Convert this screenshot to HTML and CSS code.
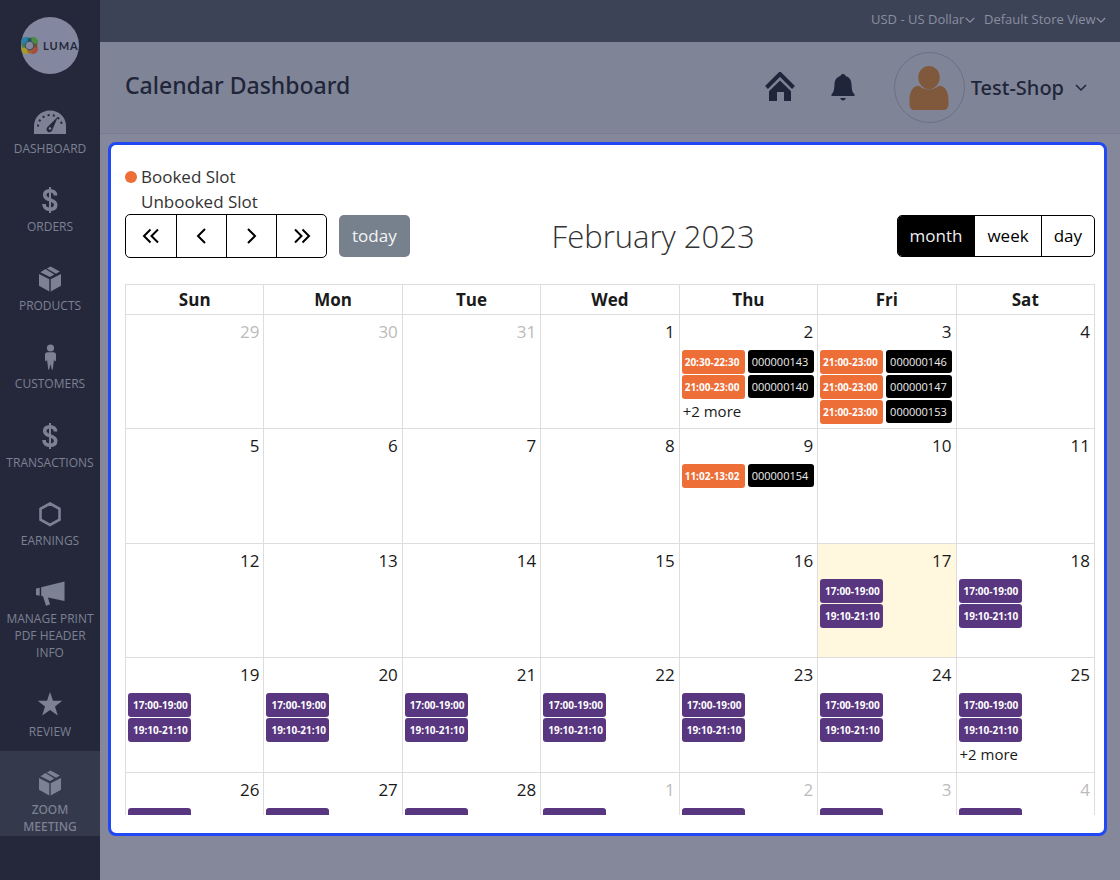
FILE: index.html
```html
<!DOCTYPE html>
<html lang="en">
<head>
    <meta charset="UTF-8">
    <meta name="viewport" content="width=device-width, initial-scale=1.0">
    <title>Calendar Dashboard</title>
    <link rel="stylesheet" href="styles.css">
</head>
<body>

    <!-- Shared icons -->
    <svg class="sprite" aria-hidden="true">
        <symbol id="icon-dollar" viewBox="0 0 16 28">
            <path d="M8 1v26" stroke="currentColor" stroke-width="2"/>
            <path d="M13.500 9.500c0-3.200-2.300-4.800-5.500-4.800S2.700 6.200 2.700 9c0 6.500 11 3.300 11 9.800 0 3-2.400 4.500-5.700 4.500s-6-1.700-6-5.300" fill="none" stroke="currentColor" stroke-width="3.600"/>
        </symbol>
        <symbol id="icon-box" viewBox="0 0 24 28">
            <path d="M1 9l10.300 5.200V26.500L1 20.800zM23 9l-10.300 5.200V26.500L23 20.800zM7.500 3.900l8.800 5.500-4.300 2.600L2.500 7.200zM12.500 1.500l9.300 5.100-3.800 2.200-9.200-5.400z" fill="currentColor"/>
        </symbol>
        <symbol id="icon-chevron" viewBox="0 0 12 8">
            <path d="M1 1l5 5 5-5" fill="none" stroke="currentColor" stroke-width="1.500"/>
        </symbol>
    </svg>

    <!-- Sidebar -->
    <aside class="sidebar">
        <a href="#" class="logo" aria-label="Luma">
            <svg width="17" height="17" viewBox="0 0 18 18">
                <rect x="0" y="7" width="11" height="11" rx="5" fill="#a79a2c"/>
                <rect x="7" y="7" width="11" height="11" rx="5" fill="#a4503f"/>
                <rect x="7" y="0" width="11" height="11" rx="5" fill="#4c8a45"/>
                <rect x="0" y="0" width="11" height="11" rx="5" fill="#2c7fa6"/>
                <path d="M7 1h4v4H7z" fill="#1d5a60"/>
                <path d="M13 7h4v4h-4z" fill="#735031"/>
                <path d="M7 13h4v4H7z" fill="#a0632c"/>
                <path d="M1 7h4v4H1z" fill="#3f7d55"/>
                <circle cx="9" cy="9" r="4.500" fill="#8388a0" stroke="#35425a" stroke-width="1"/>
            </svg>
            <span>LUMA</span>
        </a>
        <nav class="menu">
            <a href="#" class="menu-item">
                <svg width="34" height="28" viewBox="0 0 34 28">
                    <path d="M1 26V18C1 9 8 2.500 17 2.500S33 9 33 18v8z" fill="currentColor"/>
                    <g fill="none" stroke="#25283a">
                        <path d="M5 18.500a12 11.500 0 0 1 24 0" stroke-width="2" stroke-dasharray="2 3.300"/>
                        <path d="M25 8.500l-5.500 13a3 3 0 1 1-5-2.500z" fill="#25283a" stroke="none"/>
                        <circle cx="17" cy="20.500" r="1.300" fill="#8085a0" stroke="none"/>
                    </g>
                </svg>
                <span>DASHBOARD</span>
            </a>
            <a href="#" class="menu-item">
                <svg width="16" height="28"><use href="#icon-dollar"/></svg>
                <span>ORDERS</span>
            </a>
            <a href="#" class="menu-item">
                <svg width="24" height="28"><use href="#icon-box"/></svg>
                <span>PRODUCTS</span>
            </a>
            <a href="#" class="menu-item">
                <svg width="14" height="28" viewBox="0 0 14 28">
                    <circle cx="7.500" cy="5" r="3.600" fill="currentColor"/>
                    <path d="M4.500 9.300h6c1.700 0 2.500 1 2.500 2.700V17.500l-1.300 1-.7-2-.5 4-.8 6.200h-.8L7.500 21l-1.400 5.700h-.8L4.500 20.500l-.5-4-.7 2-1.300-1V12c0-1.700.8-2.700 2.500-2.700z" fill="currentColor"/>
                </svg>
                <span>CUSTOMERS</span>
            </a>
            <a href="#" class="menu-item">
                <svg width="16" height="28"><use href="#icon-dollar"/></svg>
                <span>TRANSACTIONS</span>
            </a>
            <a href="#" class="menu-item">
                <svg width="24" height="28" viewBox="0 0 24 28">
                    <path d="M12 3.500l9.500 5.300v10.900L12 25 2.500 19.700V8.800z" fill="none" stroke="currentColor" stroke-width="2.600"/>
                </svg>
                <span>EARNINGS</span>
            </a>
            <a href="#" class="menu-item">
                <svg width="30" height="28" viewBox="0 0 30 28">
                    <path d="M1 10.500l3.700-.8v8L1 17zM6.200 9.200L29.500 3.500V23L13 19.500l2 7-4 1.200-3-9.500-1.800-.4z" fill="currentColor"/>
                </svg>
                <span>MANAGE PRINT PDF HEADER INFO</span>
            </a>
            <a href="#" class="menu-item">
                <svg width="26" height="28" viewBox="0 0 26 28">
                    <path d="M13 1l3 8.800H25.300l-7.300 5.600 2.800 9L13 19l-7.800 5.400 2.800-9L.7 9.800H10z" fill="currentColor"/>
                </svg>
                <span>REVIEW</span>
            </a>
            <a href="#" class="menu-item active">
                <svg width="24" height="28"><use href="#icon-box"/></svg>
                <span>ZOOM MEETING</span>
            </a>
        </nav>
    </aside>

    <div class="page">
        <!-- Currency and store view -->
        <div class="topbar">
            <label class="switcher">
                <select aria-label="Currency"><option>USD - US Dollar</option></select>
                <svg width="10" height="7"><use href="#icon-chevron"/></svg>
            </label>
            <label class="switcher">
                <select aria-label="Store view"><option>Default Store View</option></select>
                <svg width="10" height="7"><use href="#icon-chevron"/></svg>
            </label>
        </div>

        <header class="header">
            <h1>Calendar Dashboard</h1>
            <a href="#" class="home" aria-label="Home">
                <svg width="30" height="30" viewBox="0 0 30 30" fill="currentColor">
                    <path d="M15 8.500l11 10.800V29h-7v-9h-7v9H4v-9.700z"/>
                    <path d="M1.500 16.500L15 3l13.500 13.500" fill="none" stroke="#7f8496" stroke-width="6"/>
                    <path d="M1.500 15.500L15 2l13.500 13.500" fill="none" stroke="currentColor" stroke-width="4"/>
                </svg>
            </a>
            <button class="bell" aria-label="Notifications">
                <svg width="24" height="28" viewBox="0 0 24 28" fill="currentColor">
                    <path d="M12 1c1.500 0 2.300.8 2.600 1.900C18.500 4 20.300 7 20.500 11c.2 5.500.8 8.500 3 10.300V23H.5v-1.700c2.200-1.800 2.800-4.800 3-10.300.2-4 2-7 5.900-8.100C9.700 1.800 10.500 1 12 1zM9.200 25h5.600c-.5 1.600-1.500 2.400-2.800 2.400S9.700 26.600 9.200 25z"/>
                </svg>
            </button>
            <button class="account">
                <span class="avatar">
                    <svg width="40" height="44" viewBox="0 0 40 44" fill="#80583c">
                        <ellipse cx="20" cy="11.500" rx="10.700" ry="11.500"/>
                        <path d="M10 19.700c6 5 14 5 20 0 6 0 9.500 6 9.500 14v4.500c0 3.500-2 5.800-5.500 5.800H6C2.500 44 .5 41.700.5 38.200V33.700c0-8 3.500-14 9.500-14z"/>
                    </svg>
                </span>
                <span>Test-Shop</span>
                <svg width="12" height="8"><use href="#icon-chevron"/></svg>
            </button>
        </header>

        <main class="panel">
            <ul class="legend">
                <li class="booked">Booked Slot</li>
                <li>Unbooked Slot</li>
            </ul>

            <div class="toolbar">
                <div class="toolbar-left">
                    <div class="btn-group nav-group">
                        <button aria-label="Previous year"><svg width="18" height="16" viewBox="0 0 18 16"><path d="M8.500 1.500L2 8l6.500 6.500M16 1.500L9.500 8l6.500 6.500"/></svg></button>
                        <button aria-label="Previous month"><svg width="18" height="16" viewBox="0 0 18 16"><path d="M12 1L5 8l7 7"/></svg></button>
                        <button aria-label="Next month"><svg width="18" height="16" viewBox="0 0 18 16"><path d="M5 1l7 7-7 7"/></svg></button>
                        <button aria-label="Next year"><svg width="18" height="16" viewBox="0 0 18 16"><path d="M2 1.500L8.500 8 2 14.500M9.500 1.500L16 8l-6.500 6.500"/></svg></button>
                    </div>
                    <button class="today-btn">today</button>
                </div>
                <h2>February 2023</h2>
                <div class="btn-group view-group">
                    <button class="selected">month</button>
                    <button>week</button>
                    <button>day</button>
                </div>
            </div>

            <div class="calendar-wrap">
                <table class="calendar">
                    <thead>
                        <tr>
                            <th>Sun</th>
                            <th>Mon</th>
                            <th>Tue</th>
                            <th>Wed</th>
                            <th>Thu</th>
                            <th>Fri</th>
                            <th>Sat</th>
                        </tr>
                    </thead>
                    <tbody>
                        <tr>
                            <td class="other"><div class="day">29</div></td>
                            <td class="other"><div class="day">30</div></td>
                            <td class="other"><div class="day">31</div></td>
                            <td><div class="day">1</div></td>
                            <td>
                                <div class="day">2</div>
                                <div class="event"><a href="#" class="slot taken">20:30-22:30</a><a href="#" class="order">000000143</a></div>
                                <div class="event"><a href="#" class="slot taken">21:00-23:00</a><a href="#" class="order">000000140</a></div>
                                <a href="#" class="more">+2 more</a>
                            </td>
                            <td>
                                <div class="day">3</div>
                                <div class="event"><a href="#" class="slot taken">21:00-23:00</a><a href="#" class="order">000000146</a></div>
                                <div class="event"><a href="#" class="slot taken">21:00-23:00</a><a href="#" class="order">000000147</a></div>
                                <div class="event"><a href="#" class="slot taken">21:00-23:00</a><a href="#" class="order">000000153</a></div>
                            </td>
                            <td><div class="day">4</div></td>
                        </tr>
                        <tr>
                            <td><div class="day">5</div></td>
                            <td><div class="day">6</div></td>
                            <td><div class="day">7</div></td>
                            <td><div class="day">8</div></td>
                            <td>
                                <div class="day">9</div>
                                <div class="event"><a href="#" class="slot taken">11:02-13:02</a><a href="#" class="order">000000154</a></div>
                            </td>
                            <td><div class="day">10</div></td>
                            <td><div class="day">11</div></td>
                        </tr>
                        <tr>
                            <td><div class="day">12</div></td>
                            <td><div class="day">13</div></td>
                            <td><div class="day">14</div></td>
                            <td><div class="day">15</div></td>
                            <td><div class="day">16</div></td>
                            <td class="today">
                                <div class="day">17</div>
                                <div class="event"><a href="#" class="slot">17:00-19:00</a></div>
                                <div class="event"><a href="#" class="slot">19:10-21:10</a></div>
                            </td>
                            <td>
                                <div class="day">18</div>
                                <div class="event"><a href="#" class="slot">17:00-19:00</a></div>
                                <div class="event"><a href="#" class="slot">19:10-21:10</a></div>
                            </td>
                        </tr>
                        <tr>
                            <td>
                                <div class="day">19</div>
                                <div class="event"><a href="#" class="slot">17:00-19:00</a></div>
                                <div class="event"><a href="#" class="slot">19:10-21:10</a></div>
                            </td>
                            <td>
                                <div class="day">20</div>
                                <div class="event"><a href="#" class="slot">17:00-19:00</a></div>
                                <div class="event"><a href="#" class="slot">19:10-21:10</a></div>
                            </td>
                            <td>
                                <div class="day">21</div>
                                <div class="event"><a href="#" class="slot">17:00-19:00</a></div>
                                <div class="event"><a href="#" class="slot">19:10-21:10</a></div>
                            </td>
                            <td>
                                <div class="day">22</div>
                                <div class="event"><a href="#" class="slot">17:00-19:00</a></div>
                                <div class="event"><a href="#" class="slot">19:10-21:10</a></div>
                            </td>
                            <td>
                                <div class="day">23</div>
                                <div class="event"><a href="#" class="slot">17:00-19:00</a></div>
                                <div class="event"><a href="#" class="slot">19:10-21:10</a></div>
                            </td>
                            <td>
                                <div class="day">24</div>
                                <div class="event"><a href="#" class="slot">17:00-19:00</a></div>
                                <div class="event"><a href="#" class="slot">19:10-21:10</a></div>
                            </td>
                            <td>
                                <div class="day">25</div>
                                <div class="event"><a href="#" class="slot">17:00-19:00</a></div>
                                <div class="event"><a href="#" class="slot">19:10-21:10</a></div>
                                <a href="#" class="more">+2 more</a>
                            </td>
                        </tr>
                        <tr>
                            <td><div class="day">26</div><div class="event"><a href="#" class="slot" aria-label="Open slot"></a></div></td>
                            <td><div class="day">27</div><div class="event"><a href="#" class="slot" aria-label="Open slot"></a></div></td>
                            <td><div class="day">28</div><div class="event"><a href="#" class="slot" aria-label="Open slot"></a></div></td>
                            <td class="other"><div class="day">1</div><div class="event"><a href="#" class="slot" aria-label="Open slot"></a></div></td>
                            <td class="other"><div class="day">2</div><div class="event"><a href="#" class="slot" aria-label="Open slot"></a></div></td>
                            <td class="other"><div class="day">3</div><div class="event"><a href="#" class="slot" aria-label="Open slot"></a></div></td>
                            <td class="other"><div class="day">4</div><div class="event"><a href="#" class="slot" aria-label="Open slot"></a></div></td>
                        </tr>
                    </tbody>
                </table>
            </div>
        </main>
    </div>

</body>
</html>
```
FILE: styles.css
```css
/* General Styling */
* {
    box-sizing: border-box;
}

body {
    margin: 0;
    display: flex;
    height: 100vh;
    font-family: "Open Sans", "Noto Sans", sans-serif;
    font-size: 17px;
    color: #333;
    background-color: #84889a;
}

a {
    color: inherit;
    text-decoration: none;
}

button,
select {
    font: inherit;
    color: inherit;
    background: none;
    border: none;
    margin: 0;
    padding: 0;
    cursor: pointer;
}

svg {
    display: block;
    flex: none;
}

.sprite {
    position: absolute;
    width: 0;
    height: 0;
}

/* Sidebar */
.sidebar {
    flex: none;
    width: 100px;
    padding: 17px 0 44px;
    display: flex;
    flex-direction: column;
    background-color: #25283a;
    color: #7c8194;
}

.logo {
    align-self: center;
    flex: none;
    width: 58px;
    height: 57px;
    margin-bottom: 16px;
    display: flex;
    align-items: center;
    gap: 5px;
    border-radius: 50%;
    overflow: hidden;
    background-color: #8388a0;
    color: #25283a;
    font-family: Lato, sans-serif;
    font-size: 11px;
    font-weight: 700;
    letter-spacing: 1px;
}

.menu {
    flex: 1;
    display: flex;
    flex-direction: column;
    justify-content: space-between;
}

.menu-item {
    display: flex;
    flex-direction: column;
    align-items: center;
    gap: 4px;
    padding: 18px 4px 1px;
    font-size: 12px;
    line-height: 17px;
    text-align: center;
}

.menu-item.active {
    padding-left: 20px;
    padding-right: 20px;
    background-color: #34394b;
    font-family: "Noto Sans", sans-serif;
    font-weight: 500;
}

/* Top bar */
.page {
    flex: 1;
    min-width: 0;
    display: flex;
    flex-direction: column;
}

.topbar {
    flex: none;
    height: 42px;
    padding: 0 14px 4px;
    display: flex;
    justify-content: flex-end;
    align-items: center;
    gap: 9px;
    background-color: #3c4356;
    color: #8a8fa1;
    font-size: 13px;
}

.switcher {
    display: flex;
    align-items: center;
}

.switcher select {
    appearance: none;
}

.switcher svg {
    margin-top: 3px;
}

/* Header */
.header {
    flex: none;
    height: 92px;
    padding: 0 33px 0 25px;
    display: flex;
    align-items: center;
    background-color: #7f8496;
    border-bottom: 1px solid #777c90;
    color: #1f253a;
    font-family: "Noto Sans", "Open Sans", sans-serif;
}

.header h1 {
    flex: 1;
    margin: 0;
    padding-bottom: 5px;
    font-size: 23px;
    font-weight: 500;
}

.home,
.bell {
    padding-bottom: 2px;
}

.bell {
    margin: 0 39px 0 36px;
}

.account {
    display: flex;
    align-items: center;
    gap: 6px;
    font-size: 20px;
    font-weight: 500;
}

.account > svg {
    margin-left: 5px;
}

.avatar {
    width: 71px;
    height: 71px;
    display: flex;
    align-items: center;
    justify-content: center;
    border: 1px solid #6b7085;
    border-radius: 50%;
}

/* Calendar panel */
.panel {
    flex: 1;
    min-height: 0;
    margin: 8px 13px 44px 8px;
    padding: 19px 9px 18px 14px;
    display: flex;
    flex-direction: column;
    background-color: #fff;
    border: 3px solid #2148f5;
    border-radius: 8px;
}

.legend {
    list-style: none;
    margin: 0;
    padding: 0;
    line-height: 25px;
}

.legend li {
    display: flex;
    align-items: center;
    gap: 4px;
}

.legend li::before {
    content: "";
    width: 12px;
    height: 12px;
    border-radius: 50%;
}

.legend .booked::before {
    background-color: #ed6e37;
}

.toolbar {
    display: flex;
    justify-content: space-between;
    align-items: center;
    margin-bottom: 26px;
}

.toolbar h2 {
    margin: 0;
    font-size: 31px;
    font-weight: 300;
    line-height: 42px;
}

.toolbar-left {
    display: flex;
    align-items: center;
    gap: 12px;
}

.btn-group {
    display: flex;
    border: 1px solid #000;
    border-radius: 5px;
    color: #000;
    overflow: hidden;
}

.btn-group button + button {
    border-left: 1px solid #000;
}

.nav-group button {
    width: 50px;
    height: 42px;
    display: flex;
    align-items: center;
    justify-content: center;
}

.nav-group svg {
    fill: none;
    stroke: currentColor;
    stroke-width: 2;
}

.view-group button {
    height: 40px;
    padding: 0 12px 2px;
}

.view-group .selected {
    background-color: #000;
    color: #eee;
}

.today-btn {
    height: 42px;
    padding: 0 13px 2px;
    border-radius: 5px;
    background-color: #77818d;
    color: #f4f4f4;
}

/* Month grid */
.calendar-wrap {
    flex: 1;
    min-height: 0;
    overflow: hidden;
}

.calendar {
    width: 100%;
    table-layout: fixed;
    border-collapse: collapse;
    color: #1a1a1a;
}

.calendar th,
.calendar td {
    padding: 0;
    border: 1px solid #ddd;
    vertical-align: top;
}

.calendar th {
    height: 30px;
    line-height: 29px;
}

.calendar td {
    height: 114px;
}

.calendar tr:nth-child(even) td {
    height: 115px;
}

.day {
    padding: 4px 4px 6px;
    line-height: 25px;
    text-align: right;
}

.other .day {
    color: #bbb;
}

.today {
    background-color: #fff8df;
}

.event {
    display: flex;
    align-items: flex-start;
    gap: 3px;
    margin: 0 2px 1px;
}

.slot,
.order {
    border-radius: 3px;
    line-height: 24px;
    white-space: nowrap;
}

.slot {
    width: 63px;
    height: 24px;
    padding-left: 5px;
    background-color: #593780;
    color: #fff;
    font-size: 10px;
    font-weight: 700;
}

.slot.taken {
    padding-left: 3px;
    background-color: #ed6e37;
}

.order {
    width: 66px;
    height: 23px;
    padding-left: 4px;
    background-color: #000;
    color: #eee;
    font-size: 11px;
}

.more {
    display: block;
    padding-left: 3px;
    font-size: 15px;
    line-height: 23px;
}
```
